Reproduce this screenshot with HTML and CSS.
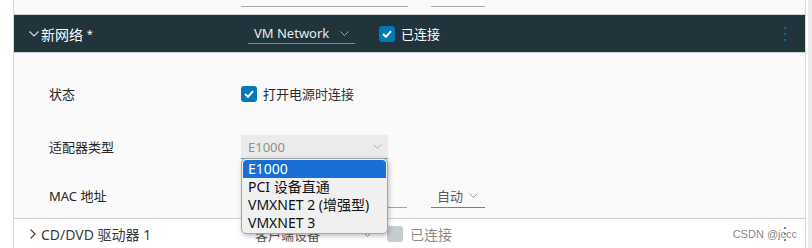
FILE: index.html
```html
<!DOCTYPE html>
<html lang="zh-CN">
<head>
  <meta charset="UTF-8">
  <title>新网络</title>
  <link rel="stylesheet" href="styles.css">
</head>
<body>
  <div class="page">
    <div class="panel">
      <div class="prev-row">
        <span class="line line-a"></span>
        <span class="line line-b"></span>
      </div>

      <div class="stack-head">
        <div class="head-title">
          <svg class="chev" width="10" height="6" viewBox="0 0 10 6"><path d="M0.5 0.5 L5 5 L9.5 0.5" fill="none" stroke="#d8dde0" stroke-width="1.1"/></svg>
          <span>新网络 <span class="star">*</span></span>
        </div>
        <div class="head-select">
          <span>VM Network</span>
          <svg width="9" height="5" viewBox="0 0 9 5"><path d="M0.5 0.5 L4.5 4.5 L8.5 0.5" fill="none" stroke="#9aa6ac" stroke-width="1"/></svg>
        </div>
        <span class="check on">
          <svg width="10" height="8" viewBox="0 0 10 8"><path d="M1 4 L4 6.8 L9 1.2" fill="none" stroke="#fff" stroke-width="2"/></svg>
        </span>
        <span class="head-text">已连接</span>
        <span class="kebab"><i></i><i></i><i></i></span>
      </div>

      <div class="stack-body">
        <div class="row row-1">
          <div class="label">状态</div>
          <div class="value">
            <span class="check on">
              <svg width="10" height="8" viewBox="0 0 10 8"><path d="M1 4 L4 6.8 L9 1.2" fill="none" stroke="#fff" stroke-width="2"/></svg>
            </span>
            <span class="value-text">打开电源时连接</span>
          </div>
        </div>

        <div class="row row-2">
          <div class="label">适配器类型</div>
          <div class="value">
            <div class="adapter">
              <span>E1000</span>
              <svg width="9" height="5" viewBox="0 0 9 5"><path d="M0.5 0.5 L4.5 4.5 L8.5 0.5" fill="none" stroke="#b5b5b5" stroke-width="1"/></svg>
              <ul class="options">
                <li class="picked">E1000</li>
                <li>PCI 设备直通</li>
                <li>VMXNET 2 (增强型)</li>
                <li>VMXNET 3</li>
              </ul>
            </div>
          </div>
        </div>

        <div class="row row-3">
          <div class="label">MAC 地址</div>
          <div class="value">
            <span class="mac-input"></span>
            <div class="auto-select">
              <span>自动</span>
              <svg width="9" height="5" viewBox="0 0 9 5"><path d="M0.5 0.5 L4.5 4.5 L8.5 0.5" fill="none" stroke="#a0a0a0" stroke-width="1"/></svg>
            </div>
          </div>
        </div>
      </div>

      <div class="stack-foot">
        <div class="foot-title">
          <svg class="chev" width="6" height="10" viewBox="0 0 6 10"><path d="M0.6 0.5 L5 5 L0.6 9.5" fill="none" stroke="#444" stroke-width="1.2"/></svg>
          <span>CD/DVD 驱动器 1</span>
        </div>
        <div class="foot-select">
          <span>客户端设备</span>
          <svg width="9" height="5" viewBox="0 0 9 5"><path d="M0.5 0.5 L4.5 4.5 L8.5 0.5" fill="none" stroke="#999" stroke-width="1"/></svg>
        </div>
        <span class="check off"></span>
        <span class="foot-text">已连接</span>
        <span class="kebab"><i></i><i></i><i></i></span>
      </div>
    </div>
    <div class="scrollbar"></div>
    <div class="watermark">CSDN @jccc</div>
  </div>
</body>
</html>
```

FILE: styles.css
```css
body {
  margin: 0;
  background: #fff;
  font-family: "Noto Sans", "Noto Sans CJK SC", sans-serif;
  font-size: 13px;
  color: #2e2e2e;
}
.page {
  position: relative;
  display: flex;
  height: 248px;
  overflow: hidden;
  padding-left: 13px;
}
.panel {
  width: 791px;
  border-left: 1px solid #d7dcdf;
  border-right: 1px solid #d7dcdf;
  background: #fafafa;
}
.scrollbar {
  width: 4px;
  margin-left: 2px;
  background: #ececec;
}
.prev-row {
  height: 14px;
  display: flex;
  align-items: flex-start;
  padding-left: 227px;
  padding-top: 6px;
  box-sizing: border-box;
}
.line {
  border-top: 1px solid #a4a4a4;
}
.line-a {
  width: 167px;
}
.line-b {
  width: 54px;
  margin-left: 23px;
}
.stack-head {
  height: 37px;
  display: flex;
  align-items: center;
  background: #21333b;
  border-top: 1px solid #c9d3d8;
  border-bottom: 1px solid #c9d3d8;
  color: #fff;
}
.head-title {
  width: 234px;
  padding-left: 15px;
  box-sizing: border-box;
  display: flex;
  align-items: center;
  gap: 2px;
  font-size: 14px;
}
.star {
  font-size: 11px;
  vertical-align: 2px;
}
.head-select {
  width: 107px;
  height: 20px;
  box-sizing: border-box;
  border-bottom: 1px solid #7b8a91;
  padding-left: 6px;
  display: flex;
  align-items: center;
  gap: 10px;
  color: #e8ecee;
}
.head-select span {
  width: 76px;
}
.check {
  width: 16px;
  height: 16px;
  border-radius: 3px;
  display: inline-flex;
  align-items: center;
  justify-content: center;
  box-sizing: border-box;
  flex: none;
}
.check.on {
  background: #0079b8;
}
.check.off {
  background: #c6cdd1;
}
.stack-head .check {
  margin-left: 24px;
}
.head-text {
  margin-left: 6px;
}
.kebab {
  margin-left: auto;
  margin-right: 19px;
  display: flex;
  flex-direction: column;
  gap: 4px;
}
.kebab i {
  width: 2px;
  height: 2px;
  background: #0079b8;
  border-radius: 1px;
}
.stack-body {
  padding-top: 15px;
  height: 165px;
  box-sizing: border-box;
}
.row {
  display: flex;
  align-items: center;
}
.row-1 {
  height: 51px;
}
.row-2 {
  height: 54px;
}
.row-3 {
  height: 45px;
}
.label {
  width: 227px;
  padding-left: 35px;
  box-sizing: border-box;
  color: #262626;
}
.value {
  display: flex;
  align-items: center;
}
.value-text {
  margin-left: 6px;
}
.adapter {
  position: relative;
  width: 147px;
  height: 24px;
  margin-top: 2px;
  box-sizing: border-box;
  background: #ebebeb;
  border-bottom: 1px solid #4f9cc6;
  padding-left: 7px;
  padding-right: 6px;
  display: flex;
  align-items: center;
  justify-content: space-between;
  color: #8f8f8f;
}
.options {
  position: absolute;
  top: 100%;
  left: 0;
  width: 147px;
  margin: 0;
  padding: 1px;
  list-style: none;
  box-sizing: border-box;
  background: #f0f0f0;
  border: 1px solid #a6a6a6;
  border-radius: 5px;
  box-shadow: 1px 2px 5px rgba(0, 0, 0, 0.25);
  color: #111;
  font-size: 14px;
  z-index: 2;
}
.options li {
  height: 18px;
  line-height: 18px;
  padding-left: 5px;
}
.options li.picked {
  background: #1a6fd5;
  color: #fff;
  border-radius: 4px 4px 0 0;
}
.mac-input {
  width: 166px;
  height: 24px;
  border-bottom: 1px solid #a4a4a4;
  box-sizing: border-box;
}
.auto-select {
  width: 54px;
  height: 24px;
  margin-left: 24px;
  box-sizing: border-box;
  border-bottom: 1px solid #7d7d7d;
  padding-left: 6px;
  display: flex;
  align-items: center;
  gap: 6px;
  color: #5a5a5a;
}
.stack-foot {
  height: 30px;
  display: flex;
  align-items: center;
  background: #fff;
  border-top: 1px solid #c9d3d8;
}
.foot-title {
  width: 234px;
  padding-left: 16px;
  box-sizing: border-box;
  display: flex;
  align-items: center;
  gap: 5px;
  font-size: 14px;
  color: #3a3a3a;
}
.foot-select {
  width: 124px;
  box-sizing: border-box;
  padding-left: 7px;
  display: flex;
  align-items: center;
  justify-content: space-between;
  color: #555;
}
.stack-foot .check {
  margin-left: 15px;
}
.foot-text {
  margin-left: 7px;
  color: #8c8c8c;
  font-size: 14px;
}
.watermark {
  position: absolute;
  right: 15px;
  bottom: 8px;
  font-family: "Liberation Sans", Arial, sans-serif;
  font-size: 11px;
  color: rgba(110, 110, 110, 0.85);
  z-index: 3;
}
```
